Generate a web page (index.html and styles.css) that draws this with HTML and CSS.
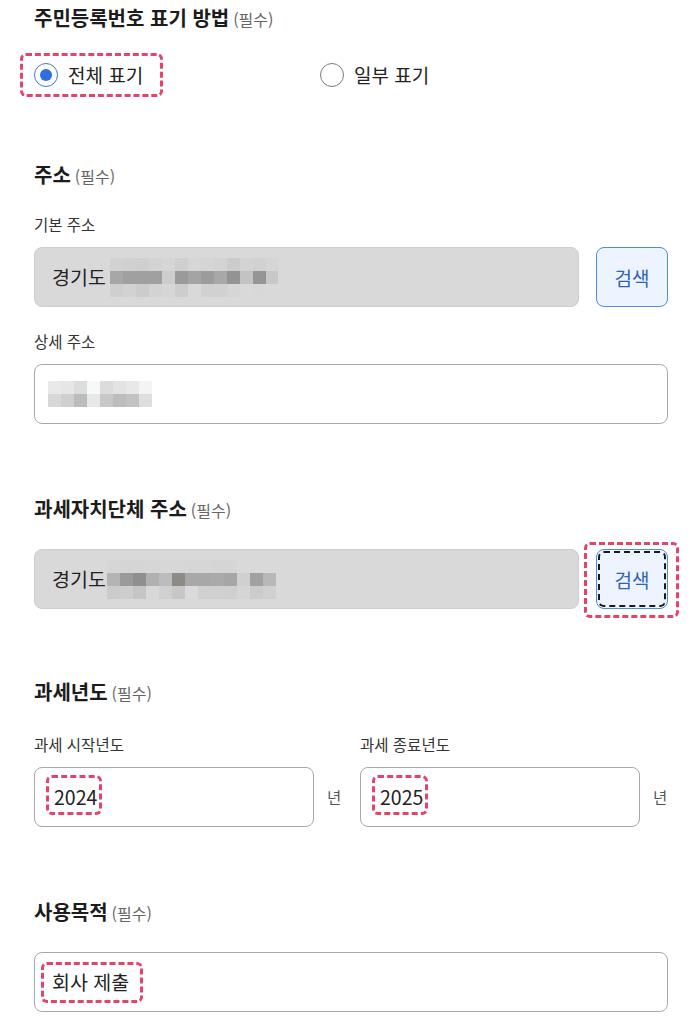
FILE: index.html
```html
<!DOCTYPE html>
<html lang="ko">
<head>
<meta charset="utf-8">
<link rel="stylesheet" href="styles.css">
</head>
<body>
<div class="page">
  <section class="sec sec-first">
    <h2 class="title">주민등록번호 표기 방법 <span class="req">(필수)</span></h2>
    <div class="radios">
      <label class="radio mark mark-radio"><span class="dot on"></span><span>전체 표기</span></label>
      <label class="radio"><span class="dot"></span><span>일부 표기</span></label>
    </div>
  </section>

  <section class="sec sec-addr">
    <h2 class="title">주소 <span class="req">(필수)</span></h2>
    <div class="label lbl-first">기본 주소</div>
    <div class="row">
      <div class="field ro">경기도<svg class="blur" width="168" height="39" viewBox="0 0 168 39">
        <rect x="0" y="0" width="13" height="13" fill="#d2d2d2"/><rect x="13" y="0" width="13" height="13" fill="#d0d0d0"/><rect x="26" y="0" width="13" height="13" fill="#cfcfcf"/><rect x="39" y="0" width="13" height="13" fill="#d3d3d3"/><rect x="52" y="0" width="13" height="13" fill="#d6d6d6"/><rect x="65" y="0" width="13" height="13" fill="#cfcfcf"/><rect x="78" y="0" width="13" height="13" fill="#d6d6d6"/><rect x="91" y="0" width="13" height="13" fill="#d5d5d5"/><rect x="104" y="0" width="13" height="13" fill="#d3d3d3"/><rect x="117" y="0" width="13" height="13" fill="#cccccc"/><rect x="130" y="0" width="13" height="13" fill="#d3d3d3"/><rect x="143" y="0" width="13" height="13" fill="#d1d1d1"/><rect x="156" y="0" width="12" height="13" fill="#d5d5d5"/>
        <rect x="0" y="13" width="13" height="13" fill="#a7a7a7"/><rect x="13" y="13" width="13" height="13" fill="#a0a0a0"/><rect x="26" y="13" width="13" height="13" fill="#a0a0a0"/><rect x="39" y="13" width="13" height="13" fill="#a0a0a0"/><rect x="52" y="13" width="13" height="13" fill="#cdcdcd"/><rect x="65" y="13" width="13" height="13" fill="#9a9a9a"/><rect x="78" y="13" width="13" height="13" fill="#a4a4a4"/><rect x="91" y="13" width="13" height="13" fill="#9c9c9c"/><rect x="104" y="13" width="13" height="13" fill="#a8a8a8"/><rect x="117" y="13" width="13" height="13" fill="#939393"/><rect x="130" y="13" width="13" height="13" fill="#c3c3c3"/><rect x="143" y="13" width="13" height="13" fill="#959595"/><rect x="156" y="13" width="12" height="13" fill="#c8c8c8"/>
        <rect x="0" y="26" width="13" height="13" fill="#cfcfcf"/><rect x="13" y="26" width="13" height="13" fill="#d2d2d2"/><rect x="26" y="26" width="13" height="13" fill="#cccccc"/><rect x="39" y="26" width="13" height="13" fill="#d3d3d3"/><rect x="52" y="26" width="13" height="13" fill="#d6d6d6"/><rect x="65" y="26" width="13" height="13" fill="#cdcdcd"/><rect x="78" y="26" width="13" height="13" fill="#d9d9d9"/><rect x="91" y="26" width="13" height="13" fill="#d1d1d1"/><rect x="104" y="26" width="13" height="13" fill="#d1d1d1"/><rect x="117" y="26" width="13" height="13" fill="#d6d6d6"/><rect x="130" y="26" width="13" height="13" fill="#d9d9d9"/><rect x="143" y="26" width="13" height="13" fill="#d8d8d8"/><rect x="156" y="26" width="12" height="13" fill="#d9d9d9"/>
      </svg></div>
      <button class="btn">검색</button>
    </div>
    <div class="label lbl-next">상세 주소</div>
    <div class="row">
      <div class="field"><svg class="blur blur-detail" width="104" height="26" viewBox="0 0 104 26">
        <rect x="0" y="0" width="13" height="13" fill="#e9e9e9"/><rect x="13" y="0" width="13" height="13" fill="#e6e6e6"/><rect x="26" y="0" width="13" height="13" fill="#dcdcdc"/><rect x="39" y="0" width="13" height="13" fill="#f6f9fa"/><rect x="52" y="0" width="13" height="13" fill="#dcdcdc"/><rect x="65" y="0" width="13" height="13" fill="#e3e3e3"/><rect x="78" y="0" width="13" height="13" fill="#e8e8e8"/><rect x="91" y="0" width="13" height="13" fill="#f4f4f4"/>
        <rect x="0" y="13" width="13" height="13" fill="#d8d8d8"/><rect x="13" y="13" width="13" height="13" fill="#cfcfcf"/><rect x="26" y="13" width="13" height="13" fill="#bcbcbc"/><rect x="39" y="13" width="13" height="13" fill="#e8e8e8"/><rect x="52" y="13" width="13" height="13" fill="#c8c8c8"/><rect x="65" y="13" width="13" height="13" fill="#bdbdbd"/><rect x="78" y="13" width="13" height="13" fill="#c2c2c2"/><rect x="91" y="13" width="13" height="13" fill="#dedede"/>
      </svg></div>
    </div>
  </section>

  <section class="sec sec-gap">
    <h2 class="title">과세자치단체 주소 <span class="req">(필수)</span></h2>
    <div class="row row-direct">
      <div class="field ro">경기도<svg class="blur blur-tight" width="169" height="39" viewBox="0 0 169 39">
        <rect x="0" y="0" width="13" height="13" fill="#d6d6d6"/><rect x="13" y="0" width="13" height="13" fill="#d5d5d5"/><rect x="26" y="0" width="13" height="13" fill="#d5d5d5"/><rect x="39" y="0" width="13" height="13" fill="#d6d6d6"/><rect x="52" y="0" width="13" height="13" fill="#d7d7d7"/><rect x="65" y="0" width="13" height="13" fill="#d7d7d7"/><rect x="78" y="0" width="13" height="13" fill="#d6d6d6"/><rect x="91" y="0" width="13" height="13" fill="#d6d6d6"/><rect x="104" y="0" width="13" height="13" fill="#d5d5d5"/><rect x="117" y="0" width="13" height="13" fill="#d5d5d5"/><rect x="130" y="0" width="13" height="13" fill="#d9d9d9"/><rect x="143" y="0" width="13" height="13" fill="#d9d9d9"/><rect x="156" y="0" width="13" height="13" fill="#d9d9d9"/>
        <rect x="0" y="13" width="13" height="13" fill="#b4b4b4"/><rect x="13" y="13" width="13" height="13" fill="#9a9a9a"/><rect x="26" y="13" width="13" height="13" fill="#8f8f8f"/><rect x="39" y="13" width="13" height="13" fill="#b0b0b0"/><rect x="52" y="13" width="13" height="13" fill="#bcbcbc"/><rect x="65" y="13" width="13" height="13" fill="#8e8a85"/><rect x="78" y="13" width="13" height="13" fill="#a8a8a8"/><rect x="91" y="13" width="13" height="13" fill="#a8a8a8"/><rect x="104" y="13" width="13" height="13" fill="#aaaaaa"/><rect x="117" y="13" width="13" height="13" fill="#a6a6a6"/><rect x="130" y="13" width="13" height="13" fill="#d0d0d0"/><rect x="143" y="13" width="13" height="13" fill="#a4a0a0"/><rect x="156" y="13" width="13" height="13" fill="#b8b8b8"/>
        <rect x="0" y="26" width="13" height="13" fill="#cbcbcb"/><rect x="13" y="26" width="13" height="13" fill="#cdcdcd"/><rect x="26" y="26" width="13" height="13" fill="#c5c5c5"/><rect x="39" y="26" width="13" height="13" fill="#d8d8d8"/><rect x="52" y="26" width="13" height="13" fill="#d0d0d0"/><rect x="65" y="26" width="13" height="13" fill="#c7c7c7"/><rect x="78" y="26" width="13" height="13" fill="#dadada"/><rect x="91" y="26" width="13" height="13" fill="#d0d0d0"/><rect x="104" y="26" width="13" height="13" fill="#d0d0d0"/><rect x="117" y="26" width="13" height="13" fill="#cfcfcf"/><rect x="130" y="26" width="13" height="13" fill="#d5d5d5"/><rect x="143" y="26" width="13" height="13" fill="#cccccc"/><rect x="156" y="26" width="13" height="13" fill="#d0d0d0"/>
      </svg></div>
      <button class="btn focused mark mark-btn">검색</button>
    </div>
  </section>

  <section class="sec sec-year">
    <h2 class="title">과세년도 <span class="req">(필수)</span></h2>
    <div class="years">
      <div class="year-col">
        <div class="label">과세 시작년도</div>
        <div class="unit-row">
          <div class="field"><span class="mark mark-text">2024</span></div>
          <span class="unit">년</span>
        </div>
      </div>
      <div class="year-col">
        <div class="label">과세 종료년도</div>
        <div class="unit-row">
          <div class="field"><span class="mark mark-text">2025</span></div>
          <span class="unit">년</span>
        </div>
      </div>
    </div>
  </section>

  <section class="sec sec-gap">
    <h2 class="title">사용목적 <span class="req">(필수)</span></h2>
    <div class="row row-direct">
      <div class="field"><span class="mark mark-purpose">회사 제출</span></div>
    </div>
  </section>
</div>
</body>
</html>
```

FILE: styles.css
```css
* { box-sizing: border-box; }
html, body { margin: 0; padding: 0; background: #ffffff; }
body {
  font-family: "Noto Sans CJK KR", "Noto Sans", sans-serif;
  color: #222222;
}
.page {
  width: 691px;
  padding: 5px 23px 0 34px;
  display: flex;
  flex-direction: column;
}
.sec { display: flex; flex-direction: column; }
.sec-first { gap: 21px; }
.sec-addr { margin-top: 65px; }
.sec-gap { margin-top: 72px; }
.sec-year { margin-top: 70px; }

.title {
  margin: 0;
  height: 26px;
  display: flex;
  align-items: baseline;
  gap: 4px;
  font-size: 20px;
  line-height: 26px;
  font-weight: 700;
  color: #1c1c1c;
}
.req {
  font-size: 16px;
  line-height: 20px;
  font-weight: 400;
  color: #666666;
}
.label {
  font-size: 15.5px;
  line-height: 22px;
  height: 22px;
  color: #333333;
  margin-bottom: 12px;
}
.lbl-first { margin-top: 25px; }
.lbl-next { margin-top: 23px; }
.row { display: flex; gap: 17px; }
.row-direct { margin-top: 27px; }
.field {
  flex: 1;
  height: 60px;
  border: 1px solid #a8a8a8;
  border-radius: 8px;
  background: #ffffff;
  display: flex;
  align-items: center;
  padding: 0 17px;
  font-size: 19.5px;
  line-height: 26px;
  color: #222222;
}
.field.ro {
  background: #d9d9d9;
  border-color: #cdcdcd;
}
.blur { display: block; margin-left: 4px; flex: none; }
.blur-tight { margin-left: 1px; }
.blur-detail { margin-left: -4px; }
.btn {
  width: 72px;
  height: 60px;
  flex: none;
  border: 1px solid #4a8ce6;
  border-radius: 8px;
  background: #edf4ff;
  color: #2f62b3;
  font-family: inherit;
  font-size: 19px;
  padding: 0;
}
.btn.focused {
  outline: 2px dashed #1a1a1a;
  outline-offset: -4px;
}

/* radios */
.radios {
  display: grid;
  grid-template-columns: 286px 1fr;
  height: 45px;
  align-items: center;
}
.radio {
  display: flex;
  align-items: center;
  gap: 10px;
  font-size: 19px;
  line-height: 26px;
  color: #222222;
  width: max-content;
}
.dot {
  width: 24px;
  height: 24px;
  border-radius: 50%;
  border: 1.5px solid #7a7a7a;
  background: #ffffff;
  display: flex;
  align-items: center;
  justify-content: center;
}
.dot.on { border-color: #3a78e0; }
.dot.on::before {
  content: "";
  width: 12px;
  height: 12px;
  border-radius: 50%;
  background: #2f6ee2;
}

/* annotations */
.mark { position: relative; }
.mark::after {
  content: "";
  position: absolute;
  border: 3px dashed #e4436b;
  border-radius: 6px;
  pointer-events: none;
}
.mark-radio::after { top: -9px; bottom: -9px; left: -14px; right: -20px; }
.mark-btn::after { top: -8px; bottom: -10px; left: -13px; right: -12px; }
.mark-text { margin-left: 2px; }
.mark-text::after { top: -9px; bottom: -5px; left: -8px; right: -5px; }
.mark-purpose::after { top: -7px; bottom: -8px; left: -11px; right: -14px; }

/* years */
.years {
  display: grid;
  grid-template-columns: 308px 308px;
  gap: 18px;
  margin-top: 28px;
}
.year-col { display: flex; flex-direction: column; }
.unit-row { display: flex; align-items: center; }
.unit {
  width: 28px;
  padding-left: 13px;
  font-size: 15.5px;
  color: #555555;
}
```
